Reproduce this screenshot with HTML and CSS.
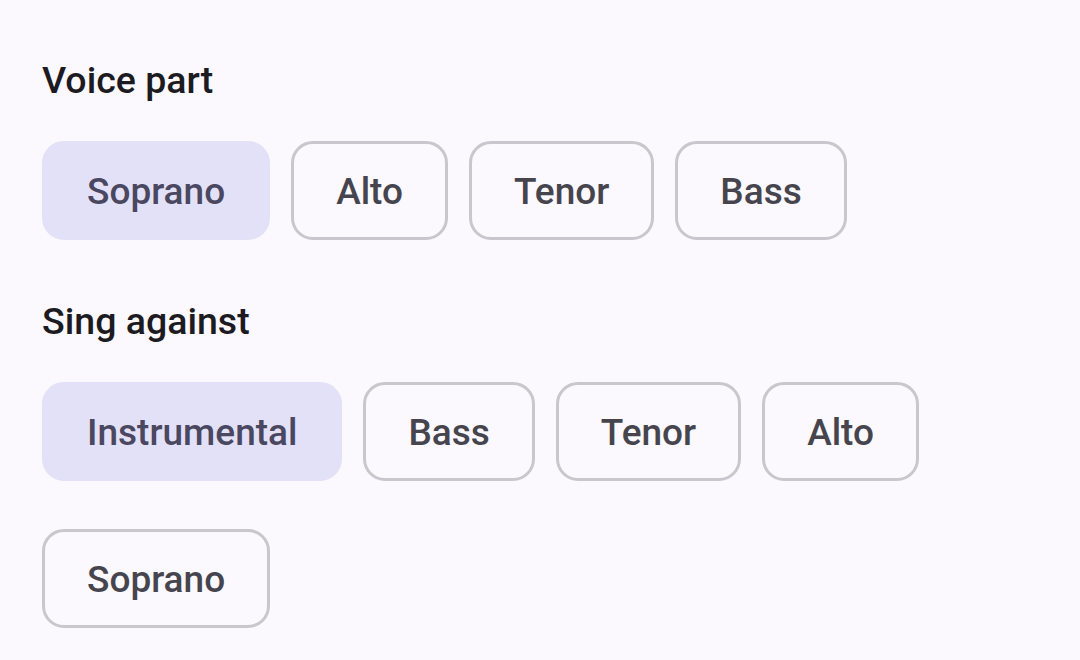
FILE: index.html
```html
<!DOCTYPE html>
<html>
<head>
<meta charset="utf-8">
<link rel="stylesheet" href="styles.css">
</head>
<body>
<div class="page">
  <section class="group">
    <div class="title">Voice part</div>
    <div class="chips">
      <div class="chip selected">Soprano</div>
      <div class="chip">Alto</div>
      <div class="chip">Tenor</div>
      <div class="chip">Bass</div>
    </div>
  </section>
  <section class="group">
    <div class="title">Sing against</div>
    <div class="chips">
      <div class="chip selected">Instrumental</div>
      <div class="chip">Bass</div>
      <div class="chip">Tenor</div>
      <div class="chip">Alto</div>
      <div class="chip">Soprano</div>
    </div>
  </section>
</div>
</body>
</html>
```
FILE: styles.css
```css
html, body {
  margin: 0;
  padding: 0;
  background: #fbf8fe;
  font-family: Roboto, "Noto Sans", sans-serif;
}
.page {
  padding: 56px 42px 0 42px;
  display: flex;
  flex-direction: column;
  gap: 57px;
}
.title {
  font-size: 37.5px;
  font-weight: 500;
  color: #1b1b21;
  line-height: 48px;
  margin-bottom: 37px;
}
.chips {
  display: flex;
  flex-wrap: wrap;
  column-gap: 21px;
  row-gap: 48px;
}
.chip {
  box-sizing: border-box;
  height: 99px;
  padding: 2px 42px 0 42px;
  border: 3px solid #c9c6cd;
  border-radius: 22px;
  display: flex;
  align-items: center;
  font-size: 37px;
  font-weight: 500;
  color: #46454e;
}
.chip.selected {
  background: #e3e1f7;
  border-color: #e3e1f7;
  color: #4a4760;
}
```
